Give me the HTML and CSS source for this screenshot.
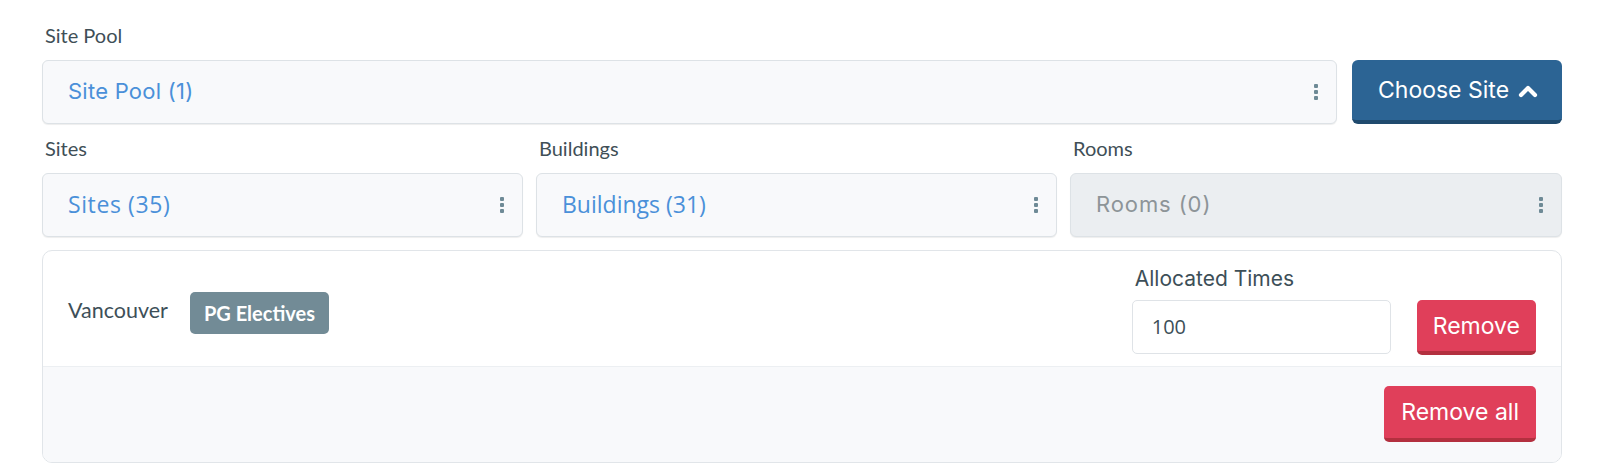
FILE: index.html
```html
<!DOCTYPE html>
<html>
<head>
<meta charset="utf-8">
<link rel="stylesheet" href="styles.css">
</head>
<body>
<div class="page">
  <div class="label">Site Pool</div>
  <div class="pool-row">
    <div class="select">
      <span class="select-text poppins blue">Site Pool (1)</span>
      <span class="dots"><i></i><i></i><i></i></span>
    </div>
    <button class="btn btn-primary">Choose Site
      <svg class="chev" width="20" height="14" viewBox="0 0 20 14"><polyline points="3,11 10,4 17,11" fill="none" stroke="#fff" stroke-width="4.2" stroke-linecap="round" stroke-linejoin="round"/></svg>
    </button>
  </div>
  <div class="cols">
    <div class="col">
      <div class="label">Sites</div>
      <div class="select">
        <span class="select-text opensans blue wide">Sites (35)</span>
        <span class="dots"><i></i><i></i><i></i></span>
      </div>
    </div>
    <div class="col">
      <div class="label">Buildings</div>
      <div class="select">
        <span class="select-text opensans blue">Buildings (31)</span>
        <span class="dots"><i></i><i></i><i></i></span>
      </div>
    </div>
    <div class="col">
      <div class="label">Rooms</div>
      <div class="select disabled">
        <span class="select-text poppins gray rooms">Rooms (0)</span>
        <span class="dots"><i></i><i></i><i></i></span>
      </div>
    </div>
  </div>
  <div class="card">
    <div class="card-row">
      <div class="site">
        <span class="site-name">Vancouver</span>
        <span class="badge">PG Electives</span>
      </div>
      <div class="alloc">
        <div class="alloc-label">Allocated Times</div>
        <div class="alloc-controls">
          <div class="num-input">100</div>
          <button class="btn btn-danger">Remove</button>
        </div>
      </div>
    </div>
    <div class="card-footer">
      <button class="btn btn-danger btn-all">Remove all</button>
    </div>
  </div>
</div>
</body>
</html>
```

FILE: styles.css
```css
* { box-sizing: border-box; }
html, body { margin: 0; padding: 0; background: #fff; }
body { font-family: Lato, "Liberation Sans", sans-serif; color: #3d4f58; }
.page { padding: 23px 38px 0 42px; width: 1600px; }

.label {
  font-family: Lato, sans-serif;
  font-size: 20px;
  line-height: 24px;
  color: #3f4f57;
  margin-left: 3px;
  margin-bottom: 13px;
}

.pool-row {
  display: grid;
  grid-template-columns: 1fr 210px;
  column-gap: 15px;
  margin-bottom: 12px;
}

.select {
  height: 64px;
  border: 1px solid #dde2e6;
  border-radius: 6px;
  background: #f8f9fb;
  box-shadow: 0 1px 1px rgba(0, 0, 0, 0.07);
  display: flex;
  align-items: center;
  justify-content: space-between;
  padding: 0 18px 0 25px;
}
.select.disabled { background: #ebeef1; }
.select-text { padding-bottom: 2px; }
.poppins { font-family: Inter, sans-serif; font-size: 22px; letter-spacing: 0.25px; }
.rooms { letter-spacing: 0.9px; }
.opensans { font-family: "Open Sans", sans-serif; font-size: 23px; }
.wide { letter-spacing: 0.6px; }
.blue { color: #4a90d9; }
.gray { color: #8d9498; }

.dots { display: flex; flex-direction: column; gap: 1.5px; }
.dots i { display: block; width: 4.5px; height: 4.5px; background: #6e8a96; border-radius: 1px; }

.btn {
  border: none;
  font-family: Inter, sans-serif;
  color: #fff;
  cursor: pointer;
  display: flex;
  align-items: center;
}
.btn-primary {
  height: 64px;
  background: #2c6494;
  border-bottom: 4px solid #1f4a6e;
  border-radius: 6px;
  font-size: 23px;
  padding: 0 22px 0 26px;
  gap: 9px;
}
.chev { margin-top: 2px; }

.cols {
  display: grid;
  grid-template-columns: 481fr 521fr 492fr;
  column-gap: 13px;
  margin-bottom: 13px;
}

.card {
  border: 1px solid #e1e5e9;
  border-radius: 10px;
  overflow: hidden;
}
.card-row {
  height: 116px;
  display: flex;
  align-items: center;
  justify-content: space-between;
  padding: 0 25px;
  border-bottom: 1px solid #eceff2;
}
.site { display: flex; align-items: center; gap: 22px; margin-top: 9px; }
.site-name { font-family: Lato, sans-serif; font-size: 21.5px; color: #3d4f58; margin-top: -6px; }
.badge {
  background: #728b96;
  color: #fff;
  font-family: Lato, sans-serif;
  font-weight: 700;
  font-size: 20px;
  height: 42px;
  line-height: 42px;
  padding: 0 14px;
  border-radius: 5px;
}
.alloc { display: flex; flex-direction: column; margin-top: 4px; }
.alloc-label {
  font-family: Inter, sans-serif;
  font-size: 21px;
  line-height: 26px;
  color: #3d4f58;
  margin-left: 3px;
  margin-bottom: 8px;
}
.alloc-controls { display: flex; gap: 26px; }
.num-input {
  width: 259px;
  height: 54px;
  border: 1px solid #dfe3e7;
  border-radius: 5px;
  background: #fff;
  font-family: "Open Sans", sans-serif;
  font-size: 20px;
  color: #3d4f58;
  display: flex;
  align-items: center;
  padding: 0 0 2px 19px;
}
.btn-danger {
  height: 55px;
  background: #e03f5a;
  border-bottom: 4px solid #b3303f;
  border-radius: 5px;
  font-size: 23px;
  padding: 0 16px;
}
.card-footer {
  background: #f8f9fb;
  height: 95px;
  display: flex;
  justify-content: flex-end;
  padding: 19px 25px 0 0;
}
.btn-all { height: 56px; padding: 0 17px; }
```
